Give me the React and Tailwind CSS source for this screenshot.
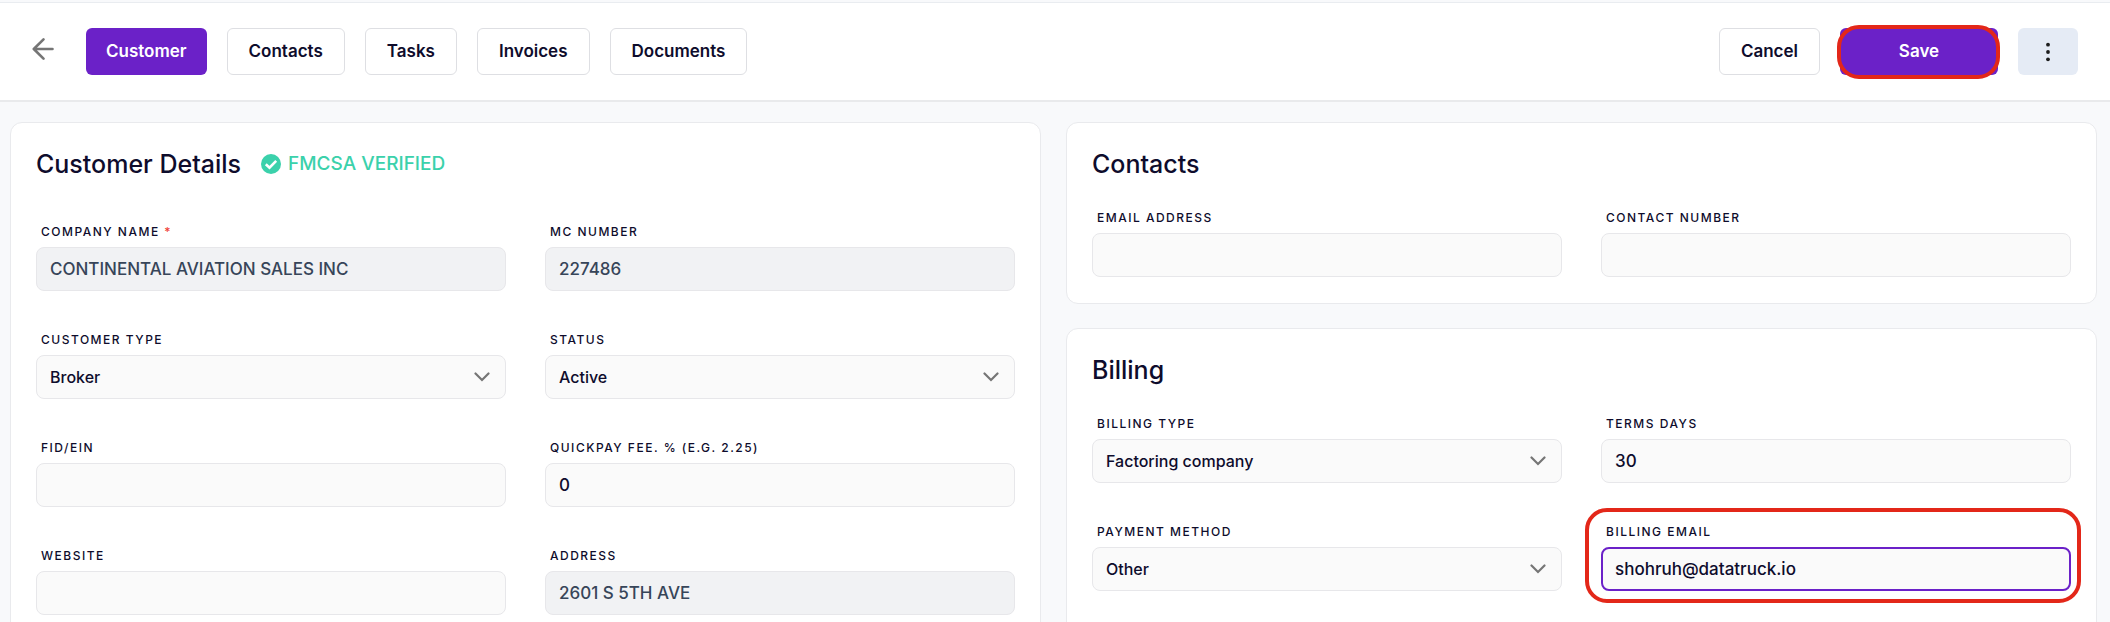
import { useState } from "react";

const tabs = ["Customer", "Contacts", "Tasks", "Invoices", "Documents"];

const ArrowLeft = () => (
  <svg width="22" height="24" viewBox="0 0 22 24" fill="none" stroke="#757575" strokeWidth="2.6" strokeLinecap="round" strokeLinejoin="round">
    <path d="M20.5 12H2M11.5 2.3L1.8 12L11.5 21.7" />
  </svg>
);

const ChevronDown = () => (
  <svg
    className="absolute right-4 top-1/2 -translate-y-1/2 pointer-events-none"
    width="16"
    height="10"
    viewBox="0 0 16 10"
    fill="none"
    stroke="#757575"
    strokeWidth="2.2"
    strokeLinecap="round"
  >
    <path d="M1.5 1.5L8 8L14.5 1.5" />
  </svg>
);

const VerifiedIcon = () => (
  <svg width="20" height="20" viewBox="0 0 20 20">
    <circle cx="10" cy="10" r="10" fill="#3bd1ab" />
    <path d="M4.8 10.2L8.5 13.7L15.2 6.8" fill="none" stroke="#fff" strokeWidth="2.6" />
  </svg>
);

const Label = ({ id, required, children }) => (
  <label htmlFor={id} className="block pl-[5px] mb-[5px] text-[12px] leading-5 font-medium tracking-[1.5px] uppercase">
    {children}
    {required && <span className="text-[#f04438]"> *</span>}
  </label>
);

const TextField = ({ id, label, type = "text", value = "", required, disabled, active }) => {
  const [text, setText] = useState(value);

  return (
    <div className="relative">
      {active && (
        <div className="absolute -top-[14px] -bottom-3 -left-4 -right-[10px] border-4 border-[#e32719] rounded-[22px] pointer-events-none" />
      )}
      <Label id={id} required={required}>{label}</Label>
      <input
        id={id}
        type={type}
        value={text}
        disabled={disabled}
        onChange={(e) => setText(e.target.value)}
        className={`block w-full h-11 rounded-lg text-[17px] font-medium focus:outline-none ${
          active ? "border-2 border-[#6b21c8] px-3" : "border border-[#e7e7ea] px-[13px]"
        } ${disabled ? "bg-[#f1f2f4] text-[#374559]" : "bg-[#fafafa]"}`}
      />
    </div>
  );
};

const SelectField = ({ id, label, options }) => (
  <div>
    <Label id={id}>{label}</Label>
    <div className="relative">
      <select
        id={id}
        className="block w-full h-11 appearance-none rounded-lg border border-[#e7e7ea] bg-[#fafafa] px-[13px] text-[16px] font-medium focus:outline-none"
      >
        {options.map((option) => (
          <option key={option}>{option}</option>
        ))}
      </select>
      <ChevronDown />
    </div>
  </div>
);

const outlineButton = "h-full px-[21px] rounded-md border border-[#dedfe3] bg-white cursor-pointer";

const App = () => {
  const [activeTab, setActiveTab] = useState("Customer");

  return (
    <div className="h-screen overflow-hidden flex flex-col bg-[#f8f9fb] text-[#0e0c2c] font-['Inter',sans-serif]">
      {/* Top bar */}
      <header className="mt-[2px] shrink-0 flex items-center justify-between border-t border-t-[#e9ecf0] border-b-2 border-b-[#e9eaec] bg-white px-8 py-[25px] text-[17px] font-semibold">
        <div className="flex items-center h-[47px] gap-5">
          <button type="button" aria-label="Back" className="mr-3 mb-[5px] cursor-pointer">
            <ArrowLeft />
          </button>
          {tabs.map((tab) => (
            <button
              key={tab}
              type="button"
              onClick={() => setActiveTab(tab)}
              className={
                tab === activeTab
                  ? "h-full px-5 rounded-md bg-[#6b21c8] text-white cursor-pointer"
                  : outlineButton
              }
            >
              {tab}
            </button>
          ))}
        </div>

        <div className="flex items-center h-[47px] gap-5">
          <button type="button" className={outlineButton}>Cancel</button>
          <div className="relative h-full">
            <button type="button" className="h-full w-[158px] rounded-md bg-[#6b21c8] text-white cursor-pointer">
              Save
            </button>
            <div className="absolute -top-[3px] -bottom-1 -left-[3px] -right-[2px] border-4 border-[#e32719] rounded-[22px] pointer-events-none" />
          </div>
          <button type="button" aria-label="More" className="h-full w-[60px] rounded-md bg-[#e5ebf5] flex items-center justify-center cursor-pointer">
            <svg width="4" height="20" viewBox="0 0 4 20" fill="#1c1c1c">
              <circle cx="2" cy="2.7" r="1.9" />
              <circle cx="2" cy="10" r="1.9" />
              <circle cx="2" cy="17.3" r="1.9" />
            </svg>
          </button>
        </div>
      </header>

      <main className="flex-1 grid grid-cols-2 gap-x-[25px] pt-5 pl-[10px] pr-[13px]">
        {/* Customer details */}
        <section className="rounded-xl border border-[#e9eaed] bg-white px-[25px] pt-[25px] pb-[26px]">
          <div className="flex items-center gap-5 h-8 mb-[42px]">
            <h2 className="text-[25px] leading-8 font-medium">Customer Details</h2>
            <span className="flex items-center gap-[7px] text-[19px] font-medium text-[#3bd1ab]">
              <VerifiedIcon />
              FMCSA VERIFIED
            </span>
          </div>
          <div className="grid grid-cols-2 gap-[39px]">
            <TextField id="company" label="Company name" value="CONTINENTAL AVIATION SALES INC" required disabled />
            <TextField id="mc" label="MC number" value="227486" disabled />
            <SelectField id="customerType" label="Customer type" options={["Broker", "Shipper"]} />
            <SelectField id="status" label="Status" options={["Active", "Inactive"]} />
            <TextField id="fid" label="FID/EIN" />
            <TextField id="quickpay" label="Quickpay fee. % (e.g. 2.25)" value="0" />
            <TextField id="website" label="Website" />
            <TextField id="address" label="Address" value="2601 S 5TH AVE" disabled />
          </div>
        </section>

        <div className="flex flex-col gap-6">
          {/* Contacts */}
          <section className="rounded-xl border border-[#e9eaed] bg-white px-[25px] pt-[25px] pb-[26px]">
            <h2 className="text-[25px] leading-8 font-medium mb-7">Contacts</h2>
            <div className="grid grid-cols-2 gap-[39px]">
              <TextField id="email" label="Email address" type="email" />
              <TextField id="phone" label="Contact number" type="tel" />
            </div>
          </section>

          {/* Billing */}
          <section className="flex-1 rounded-xl border border-[#e9eaed] bg-white px-[25px] pt-[25px] pb-[26px]">
            <h2 className="text-[25px] leading-8 font-medium mb-7">Billing</h2>
            <div className="grid grid-cols-2 gap-[39px]">
              <SelectField id="billingType" label="Billing type" options={["Factoring company", "Direct"]} />
              <TextField id="terms" label="Terms days" value="30" />
              <SelectField id="payment" label="Payment method" options={["Other", "ACH", "Check"]} />
              <TextField id="billingEmail" label="Billing email" type="email" value="shohruh@datatruck.io" active />
            </div>
          </section>
        </div>
      </main>
    </div>
  );
};

export default App;
